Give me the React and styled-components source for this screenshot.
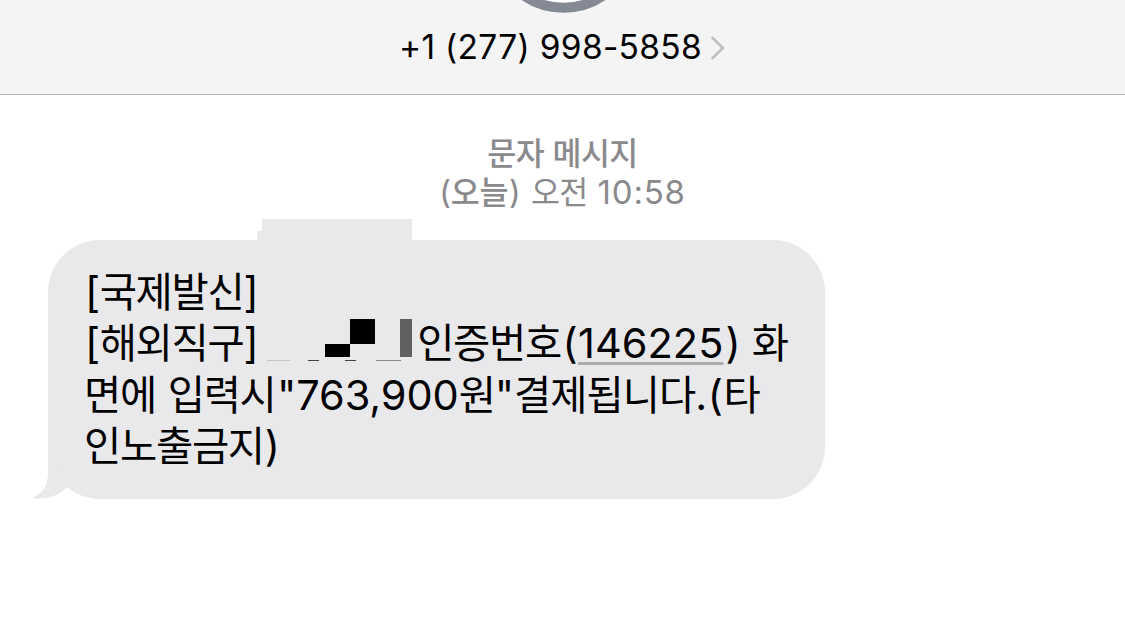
import styled, { createGlobalStyle } from 'styled-components'

const GlobalStyle = createGlobalStyle`
* {
  box-sizing: border-box;
}

body {
  margin: 0;
  background-color: #ffffff;
  overflow: hidden;
}
`

const Screen = styled.main`
width: 1125px;
height: 644px;
overflow: hidden;
background-color: #ffffff;
font-family: Inter, 'Noto Sans CJK KR', sans-serif;
`

const Header = styled.header`
height: 95px;
background-color: #f4f4f4;
border-bottom: 1px solid #b2b2b2;
display: flex;
flex-direction: column;
align-items: center;
`

const Avatar = styled.svg`
display: block;
width: 150px;
height: 14px;
`

const Contact = styled.div`
height: 66px;
display: flex;
align-items: center;
color: #000000;
`

const Phone = styled.span`
font-size: 33.5px;
line-height: 40px;
letter-spacing: 0.3px;
white-space: pre;
`

const Chevron = styled.svg`
width: 16px;
height: 26px;
margin: 2px 0 0 8px;
`

const Stamp = styled.div`
margin-top: 37px;
display: flex;
flex-direction: column;
align-items: center;
color: #8a8a8d;
`

const StampLine = styled.div`
height: 39px;
line-height: 39px;
white-space: pre;
`

const Bubble = styled.section`
position: relative;
width: 777px;
height: 259px;
margin: 30px 0 0 48px;
padding: 24px 0 0 37px;
border-radius: 52px;
background-color: #e9e9eb;
color: #000000;
`

const Tail = styled.svg`
position: absolute;
left: -18px;
bottom: 0;
width: 72px;
height: 60px;
`

const Patch = styled.div`
position: absolute;
left: ${props => props.$x}px;
top: ${props => props.$y}px;
width: ${props => props.$w}px;
height: ${props => props.$h}px;
background-color: ${props => props.$color || '#e9e9eb'};
`

const Line = styled.div`
position: relative;
height: 51.3px;
line-height: 51.3px;
font-size: 41px;
white-space: pre;
`

const Hangul = styled.span`
font-family: 'Noto Sans CJK KR', sans-serif;
font-size: ${props => props.$size || 40.5}px;
font-weight: ${props => props.$weight || 400};
letter-spacing: ${props => props.$track ?? -1.3}px;
word-spacing: ${props => props.$gap ?? 3}px;
margin-left: ${props => props.$shift || 0}px;
`

const Latin = styled.span`
font-family: Inter, sans-serif;
font-size: ${props => props.$size || 41.5}px;
letter-spacing: ${props => props.$track || 0}px;
margin-left: ${props => props.$shift || 0}px;
`

const Code = styled(Latin)`
text-decoration: underline;
text-decoration-color: #acacae;
text-decoration-thickness: 3px;
text-underline-offset: 4px;
text-decoration-skip-ink: none;
`

const Hidden = styled.span`
display: inline-block;
width: 158.5px;
`

const App = () => {
  return (
    <Screen>
      <GlobalStyle />
      <Header>
        <Avatar viewBox="0 0 150 14">
          <circle cx="75.5" cy="-62.3" r="70" fill="#ffffff" stroke="#858994" strokeWidth="10" />
        </Avatar>
        <Contact>
          <Phone>+1 (277) 998-5858</Phone>
          <Chevron viewBox="0 0 16 26">
            <path d="M2.5 3L13 13L2.5 23" fill="none" stroke="#bfbfc1" strokeWidth="2.6" strokeLinecap="round" strokeLinejoin="round" />
          </Chevron>
        </Contact>
      </Header>
      <Stamp>
        <StampLine>
          <Hangul $size={31.5} $weight={500} $track={-0.6} $gap={2}>문자 메시지</Hangul>
        </StampLine>
        <StampLine>
          <Latin $size={32}>(</Latin>
          <Hangul $size={31.5} $weight={500} $track={-0.4}>오늘</Hangul>
          <Latin $size={32} $track={0.7} $shift={1}>) </Latin>
          <Hangul $size={31.5} $track={-0.8}>오전</Hangul>
          <Latin $size={33} $track={0.8}> 10:58</Latin>
        </StampLine>
      </Stamp>
      <Bubble>
        <Tail viewBox="0 0 72 60">
          <path d="M18 0V60H72V0Z" fill="#e9e9eb" />
          <path d="M18 34C18 47 12 55 2 59.3C17 61 28 57 37.3 48L30 30Z" fill="#e9e9eb" />
          <path d="M2 60V59.3C17 61 28 57 37.3 48C46 55.5 56 59.5 71 60Z" fill="#ffffff" />
        </Tail>
        {/* masked sender name */}
        <Patch $x={214} $y={-21} $w={150} $h={22} />
        <Patch $x={209} $y={-9} $w={6} $h={10} />
        <Patch $x={302} $y={79} $w={25} $h={25} $color="#000000" />
        <Patch $x={277} $y={104} $w={25} $h={13} $color="#000000" />
        <Patch $x={352} $y={79} $w={12} $h={38} $color="#606060" />
        <Patch $x={219} $y={120} $w={23} $h={1} $color="#c4c4c6" />
        <Patch $x={260} $y={120} $w={11} $h={1} $color="#444444" />
        <Patch $x={297} $y={120} $w={11} $h={1} $color="#444444" />
        <Patch $x={328} $y={120} $w={25} $h={1} $color="#8a8a8b" />
        <Line>
          <Latin>[</Latin>
          <Hangul $shift={-0.5}>국제발신</Hangul>
          <Latin>]</Latin>
        </Line>
        <Line>
          <Latin>[</Latin>
          <Hangul $shift={-0.5}>해외직구</Hangul>
          <Latin>]</Latin>
          <Hidden />
          <Hangul>인증번호</Hangul>
          <Latin $shift={1.5}>(</Latin>
          <Code $shift={0.5}>146225</Code>
          <Latin $shift={2}>) </Latin>
          <Hangul $shift={-0.5}>화</Hangul>
        </Line>
        <Line>
          <Hangul $shift={-1} $gap={4}>면에 입력시</Hangul>
          <Latin $shift={1.5} $track={-0.1}>"763,900</Latin>
          <Hangul>원</Hangul>
          <Latin>"</Latin>
          <Hangul $track={-1}>결제됩니다</Hangul>
          <Latin $track={0.5}>.(</Latin>
          <Hangul>타</Hangul>
        </Line>
        <Line>
          <Hangul $shift={-1}>인노출금지</Hangul>
          <Latin $shift={1}>)</Latin>
        </Line>
      </Bubble>
    </Screen>
  )
}

export default App
